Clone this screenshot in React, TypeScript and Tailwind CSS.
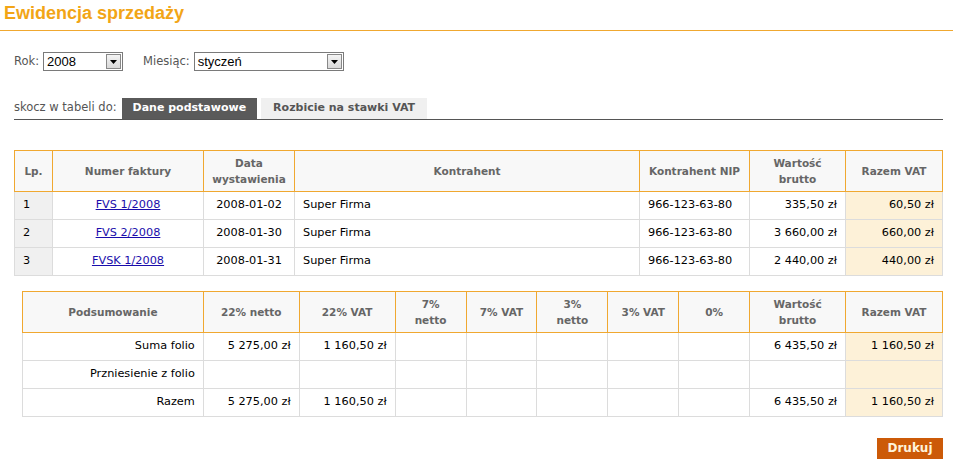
import React from "react";

const rows = [
  { lp: "1", nr: "FVS 1/2008", data: "2008-01-02", kontr: "Super Firma", nip: "966-123-63-80", brutto: "335,50 zł", vat: "60,50 zł" },
  { lp: "2", nr: "FVS 2/2008", data: "2008-01-30", kontr: "Super Firma", nip: "966-123-63-80", brutto: "3 660,00 zł", vat: "660,00 zł" },
  { lp: "3", nr: "FVSK 1/2008", data: "2008-01-31", kontr: "Super Firma", nip: "966-123-63-80", brutto: "2 440,00 zł", vat: "440,00 zł" },
];

const summary = [
  { label: "Suma folio", n22: "5 275,00 zł", v22: "1 160,50 zł", brutto: "6 435,50 zł", vat: "1 160,50 zł" },
  { label: "Przniesienie z folio", n22: "", v22: "", brutto: "", vat: "" },
  { label: "Razem", n22: "5 275,00 zł", v22: "1 160,50 zł", brutto: "6 435,50 zł", vat: "1 160,50 zł" },
];

const th = "border border-[#f0a830] bg-[#f8f8f8] px-1 text-center text-[10.5px] font-bold leading-[16px] text-[#666]";
const td = "h-[28px] border border-[#dcdcdc] px-2 text-[11.3px]";

function Select({ value, width }: { value: string; width: string }) {
  return (
    <div className={`flex h-[19px] items-stretch border border-[#7a7a7a] bg-white ${width}`}>
      <span className="flex-1 pl-[3px] font-['Liberation_Sans',Arial,sans-serif] text-[13px] leading-[17px] text-black">{value}</span>
      <span className="m-px flex w-[15px] items-center justify-center border border-[#888] bg-gradient-to-b from-[#f4f4f4] to-[#d8d8d8]">
        <svg width="7" height="4" viewBox="0 0 7 4"><path d="M0 0h7L3.5 4z" fill="#000" /></svg>
      </span>
    </div>
  );
}

export default function App() {
  return (
    <div className="h-[468px] w-[953px] overflow-hidden bg-white font-['DejaVu_Sans',Verdana,sans-serif] text-[11px] text-black">
      <h1 className="border-b border-[#f0a830] pb-[6px] pl-[4px] pt-[3px] font-['Liberation_Sans',Arial,sans-serif] text-[18px] font-bold leading-[21px] text-[#f2a516]">
        Ewidencja sprzedaży
      </h1>

      <div className="mt-[21px] flex items-center pl-[14px] text-[11.5px] text-[#555]">
        <span className="mr-[4px]">Rok:</span>
        <Select value="2008" width="w-[80px]" />
        <span className="ml-[20px] mr-[4px]">Miesiąc:</span>
        <Select value="styczeń" width="w-[150px]" />
      </div>

      <div className="ml-[14px] mr-[10px] mt-[27px] flex items-end border-b border-[#555] text-[11.5px]">
        <span className="mr-[5px] pb-[2px] text-[#555]">skocz w tabeli do:</span>
        <span className="bg-[#5a5a5a] px-[11px] py-[2px] text-[11px] font-bold text-white">Dane podstawowe</span>
        <span className="ml-[4px] bg-[#f0f0f0] px-[12px] py-[2px] text-[11px] font-bold text-[#555]">Rozbicie na stawki VAT</span>
      </div>

      <table className="ml-[14px] mt-[30px] w-[929px] border-collapse">
        <thead>
          <tr className="h-[41px]">
            <th className={`${th} w-[38px]`}>Lp.</th>
            <th className={`${th} w-[151px]`}>Numer faktury</th>
            <th className={`${th} w-[91px]`}>Data<br />wystawienia</th>
            <th className={th}>Kontrahent</th>
            <th className={`${th} w-[110px]`}>Kontrahent NIP</th>
            <th className={`${th} w-[96px]`}>Wartość<br />brutto</th>
            <th className={`${th} w-[97px]`}>Razem VAT</th>
          </tr>
        </thead>
        <tbody>
          {rows.map((r) => (
            <tr key={r.lp}>
              <td className={`${td} bg-[#f0f0f0]`}>{r.lp}</td>
              <td className={`${td} text-center`}>
                <a href="#" className="text-[#1a0dab] underline">{r.nr}</a>
              </td>
              <td className={`${td} text-center`}>{r.data}</td>
              <td className={td}>{r.kontr}</td>
              <td className={td}>{r.nip}</td>
              <td className={`${td} text-right`}>{r.brutto}</td>
              <td className={`${td} bg-[#fdf1d8] text-right`}>{r.vat}</td>
            </tr>
          ))}
        </tbody>
      </table>

      <table className="ml-[22px] mt-[15px] w-[921px] border-collapse">
        <thead>
          <tr className="h-[41px]">
            <th className={`${th} w-[181px]`}>Podsumowanie</th>
            <th className={`${th} w-[96px]`}>22% netto</th>
            <th className={`${th} w-[96px]`}>22% VAT</th>
            <th className={`${th} w-[71px]`}>7%<br />netto</th>
            <th className={`${th} w-[71px]`}>7% VAT</th>
            <th className={`${th} w-[71px]`}>3%<br />netto</th>
            <th className={`${th} w-[71px]`}>3% VAT</th>
            <th className={`${th} w-[71px]`}>0%</th>
            <th className={`${th} w-[96px]`}>Wartość<br />brutto</th>
            <th className={`${th} w-[97px]`}>Razem VAT</th>
          </tr>
        </thead>
        <tbody>
          {summary.map((s) => (
            <tr key={s.label}>
              <td className={`${td} text-right`}>{s.label}</td>
              <td className={`${td} text-right`}>{s.n22}</td>
              <td className={`${td} text-right`}>{s.v22}</td>
              <td className={td}></td>
              <td className={td}></td>
              <td className={td}></td>
              <td className={td}></td>
              <td className={td}></td>
              <td className={`${td} text-right`}>{s.brutto}</td>
              <td className={`${td} bg-[#fdf1d8] text-right`}>{s.vat}</td>
            </tr>
          ))}
        </tbody>
      </table>

      <div className="mr-[10px] mt-[21px] flex justify-end">
        <button className="h-[21px] w-[66px] bg-[#cc5a08] text-[12px] font-bold text-[#fff4dc]">Drukuj</button>
      </div>
    </div>
  );
}
